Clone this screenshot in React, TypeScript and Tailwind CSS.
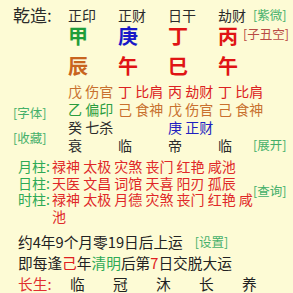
import React from 'react';

type Cell = { t: string; c: string };

const TEN = ['正印', '正财', '日干', '劫财'];
const STEMS: Cell[] = [
  { t: '甲', c: 'text-[#1f9d3a]' },
  { t: '庚', c: 'text-[#1818c8]' },
  { t: '丁', c: 'text-[#e01414]' },
  { t: '丙', c: 'text-[#e01414]' },
];
const BRANCHES: Cell[] = [
  { t: '辰', c: 'text-[#c8641e]' },
  { t: '午', c: 'text-[#e01414]' },
  { t: '巳', c: 'text-[#e01414]' },
  { t: '午', c: 'text-[#e01414]' },
];

const brown = 'text-[#c8702e]';
const red = 'text-[#dc2222]';
const green = 'text-[#2a9d3f]';
const blue = 'text-[#2020c0]';
const dark = 'text-[#2b2b2b]';

// hidden stems, one row per depth, one cell per pillar
const HIDDEN: (Cell | null)[][] = [
  [
    { t: '戊 伤官', c: brown },
    { t: '丁 比肩', c: red },
    { t: '丙 劫财', c: red },
    { t: '丁 比肩', c: red },
  ],
  [
    { t: '乙 偏印', c: green },
    { t: '己 食神', c: brown },
    { t: '戊 伤官', c: brown },
    { t: '己 食神', c: brown },
  ],
  [{ t: '癸 七杀', c: dark }, null, { t: '庚 正财', c: blue }, null],
];

const STAGES = ['衰', '临', '帝', '临'];

const SHENSHA = [
  { label: '月柱:', text: '禄神 太极 灾煞 丧门 红艳 咸池' },
  { label: '日柱:', text: '天医 文昌 词馆 天喜 阳刃 孤辰' },
  { label: '时柱:', text: '禄神 太极 月德 灾煞 丧门 红艳 咸池' },
];

const CHANGSHENG = ['临', '冠', '沐', '长', '养'];

function Tag({ children, className = '' }: { children: React.ReactNode; className?: string }) {
  return <span className={`text-[12.5px] leading-[16px] text-[#45b06a] whitespace-nowrap ${className}`}>{children}</span>;
}

export default function App() {
  return (
    <div className="w-[293px] h-[293px] overflow-hidden bg-[#fdfbd5] font-['Noto_Sans_CJK_SC',sans-serif] text-[#2b2b2b]">
      {/* chart */}
      <div className="flex pt-[4px]">
        <div className="w-[68px] shrink-0 pl-[13px] flex flex-col items-start">
          <span className="text-[17px] leading-[22px] h-[22px] text-[#2b2b2b]">乾造:</span>
          <Tag className="mt-[79px]">[字体]</Tag>
          <Tag className="mt-[9px]">[收藏]</Tag>
        </div>
        <div className="flex-1">
          <div className="flex items-center h-[22px] text-[14px]">
            {TEN.map((t, i) => (
              <span key={i} className={i === 3 ? 'w-[35px]' : 'w-[50px]'}>
                {t}
              </span>
            ))}
            <Tag>[紫微]</Tag>
          </div>
          <div className="flex items-start h-[20px]">
            {STEMS.map((s, i) => (
              <span key={i} className={`${i === 3 ? 'w-[25px]' : 'w-[50px]'} text-[20px] leading-[20px] font-bold ${s.c}`}>
                {s.t}
              </span>
            ))}
            <span className="mt-[1px] text-[12.5px] leading-[13px] text-[#b94a44] whitespace-nowrap">[子丑空]</span>
          </div>
          <div className="flex items-center h-[20px] mt-[10px]">
            {BRANCHES.map((s, i) => (
              <span key={i} className={`w-[50px] text-[20px] leading-[20px] font-bold ${s.c}`}>
                {s.t}
              </span>
            ))}
          </div>
          <div className="mt-[6px]">
            {HIDDEN.map((row, r) => (
              <div key={r} className="flex items-center h-[18px] text-[14px] leading-[18px]">
                {row.map((cell, i) => (
                  <span key={i} className={`w-[50px] shrink-0 whitespace-nowrap ${cell?.c ?? ''}`}>
                    {cell?.t ?? ''}
                  </span>
                ))}
              </div>
            ))}
            <div className="flex items-center h-[18px] text-[14px] leading-[18px]">
              {STAGES.map((t, i) => (
                <span key={i} className={i === 3 ? 'w-[35px]' : 'w-[50px]'}>
                  {t}
                </span>
              ))}
              <Tag>[展开]</Tag>
            </div>
          </div>
        </div>
      </div>

      {/* shensha */}
      <div className="flex items-center mt-[4px] pl-[18px]">
        <div className="flex flex-col">
          {SHENSHA.map((s) => (
            <div key={s.label} className="flex items-start text-[14px] leading-[16.5px]">
              <span className="w-[34px] shrink-0 text-[#2eaa55]">{s.label}</span>
              <span className="w-[202px] text-[#e02828]">{s.text}</span>
            </div>
          ))}
        </div>
        <Tag className="-ml-[1px]">[查询]</Tag>
      </div>

      {/* luck */}
      <div className="mt-[7px] pl-[18px] text-[14.7px] leading-[21px] text-[#222]">
        <div className="flex items-center">
          <span>约4年9个月零19日后上运</span>
          <Tag className="ml-[12px]">[设置]</Tag>
        </div>
        <div>
          即每逢<span className="text-[#e02020]">己</span>年<span className="text-[#2eaa55]">清明</span>后第
          <span className="text-[#e02020]">7</span>日交脱大运
        </div>
        <div className="flex">
          <span className="w-[52px] shrink-0 text-[#e03030]">长生:</span>
          {CHANGSHENG.map((t, i) => (
            <span key={i} className="w-[43px] shrink-0">
              {t}
            </span>
          ))}
        </div>
      </div>
    </div>
  );
}
